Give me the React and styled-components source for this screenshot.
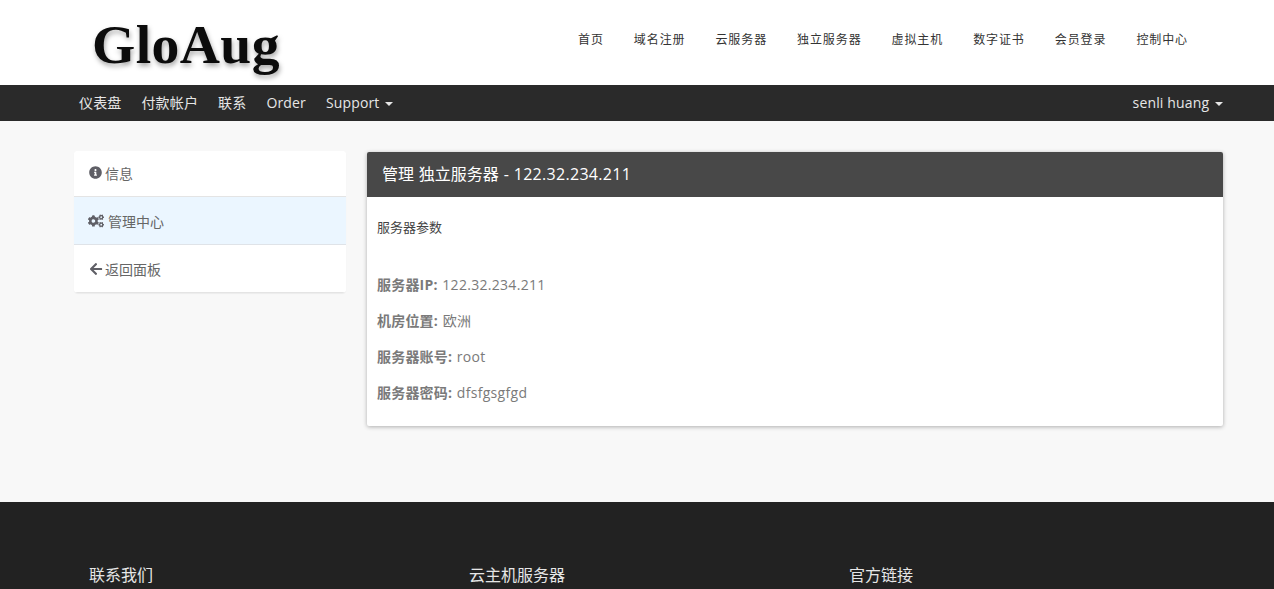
import styled, { createGlobalStyle } from "styled-components";
import { FaInfoCircle, FaCogs, FaArrowLeft } from "react-icons/fa";

const FONT = `"Open Sans", "Noto Sans CJK SC", sans-serif`;

const GlobalStyle = createGlobalStyle`
  html, body {
    margin: 0;
    padding: 0;
    height: 589px;
    overflow: hidden;
    background: #f8f8f8;
    font-family: ${FONT};
  }
  * { box-sizing: border-box; }
`;

const siteLinks = ["首页", "域名注册", "云服务器", "独立服务器", "虚拟主机", "数字证书", "会员登录", "控制中心"];
const params = [
  ["服务器IP:", "122.32.234.211"],
  ["机房位置:", "欧洲"],
  ["服务器账号:", "root"],
  ["服务器密码:", "dfsfgsgfgd"],
];

export default function App() {
  return (
    <Page>
      <GlobalStyle />
      <Header>
        <Logo>GloAug</Logo>
        <SiteNav>
          {siteLinks.map((link) => (
            <SiteLink key={link}>{link}</SiteLink>
          ))}
        </SiteNav>
      </Header>

      <ClientNav>
        <NavGroup>
          <NavLink>仪表盘</NavLink>
          <NavLink>付款帐户</NavLink>
          <NavLink>联系</NavLink>
          <NavLink>Order</NavLink>
          <NavLink>
            Support <Caret />
          </NavLink>
        </NavGroup>
        <NavLink>
          senli huang <Caret />
        </NavLink>
      </ClientNav>

      <Main>
        <Sidebar>
          <SideItem>
            <InfoIcon size={13} />
            信息
          </SideItem>
          <SideItem active>
            <CogsIcon size={16} />
            管理中心
          </SideItem>
          <SideItem>
            <BackIcon size={14} />
            返回面板
          </SideItem>
        </Sidebar>

        <Panel>
          <PanelHeading>
            管理 独立服务器 - <Latin>122.32.234.211</Latin>
          </PanelHeading>
          <PanelBody>
            <SectionTitle>服务器参数</SectionTitle>
            {params.map(([label, value]) => (
              <Param key={label}>
                <strong>{label}</strong> <Latin>{value}</Latin>
              </Param>
            ))}
          </PanelBody>
        </Panel>
      </Main>

      <Footer>
        <FooterTitle>联系我们</FooterTitle>
        <FooterTitle>云主机服务器</FooterTitle>
        <FooterTitle>官方链接</FooterTitle>
      </Footer>
    </Page>
  );
}

const Page = styled.div`
  height: 589px;
  overflow: hidden;
  display: flex;
  flex-direction: column;
`;

const Header = styled.header`
  height: 85px;
  background: #fff;
  display: flex;
  align-items: flex-start;
  justify-content: space-between;
  padding: 0 86px 0 92px;
`;

const Logo = styled.div`
  font-family: "Liberation Serif", serif;
  font-weight: 700;
  font-size: 54px;
  line-height: 54px;
  margin-top: 18px;
  letter-spacing: 0.4px;
  color: #0c0c0c;
  transform: scaleX(1.03);
  transform-origin: left center;
  filter: blur(0.7px);
  text-shadow: 1px 3px 5px rgba(0, 0, 0, 0.35);
`;

const SiteNav = styled.nav`
  display: flex;
  gap: 30px;
  margin-top: 31px;
`;

const SiteLink = styled.a`
  font-size: 12px;
  line-height: 17px;
  letter-spacing: 0.9px;
  color: #333;
`;

const ClientNav = styled.nav`
  height: 36px;
  background: #2a2a2a;
  display: flex;
  align-items: center;
  justify-content: space-between;
  padding: 0 51px 0 79px;
`;

const NavGroup = styled.div`
  display: flex;
  gap: 20px;
`;

const NavLink = styled.a`
  font-size: 14px;
  line-height: 20px;
  letter-spacing: 0.15px;
  color: #e6e6e6;
`;

const Latin = styled.span`
  letter-spacing: 0.3px;
`;

const Caret = styled.span`
  display: inline-block;
  width: 0;
  height: 0;
  margin-left: 2px;
  vertical-align: middle;
  border-top: 4px solid #e6e6e6;
  border-left: 4px solid transparent;
  border-right: 4px solid transparent;
`;

const Main = styled.main`
  height: 381px;
  display: flex;
  align-items: flex-start;
  gap: 21px;
  padding: 30px 51px 0 74px;
`;

const Sidebar = styled.aside`
  width: 272px;
  flex: none;
  background: #fff;
  border-radius: 4px;
  overflow: hidden;
  box-shadow: 0 1px 1px rgba(0, 0, 0, 0.05);
`;

const SideItem = styled.a`
  display: flex;
  align-items: center;
  height: 48px;
  padding: 0 15px;
  font-size: 14px;
  color: #666;
  background: ${(props) => (props.active ? "#ebf6ff" : "#fff")};
  border-bottom: 1px solid ${(props) => (props.active ? "#dfe3e8" : "#e4e4e4")};

  &:first-child {
    height: 46px;
    padding-bottom: 2px;
  }
`;

const InfoIcon = styled(FaInfoCircle)`
  flex: none;
  margin-right: 3px;
  color: #5f5f66;
`;

const CogsIcon = styled(FaCogs)`
  flex: none;
  margin: 0 4px 0 -1px;
  color: #5f5f66;
`;

const BackIcon = styled(FaArrowLeft)`
  flex: none;
  margin-right: 2px;
  color: #5f5f66;
`;

const Panel = styled.section`
  flex: 1;
  margin-top: 1px;
  background: #fff;
  border-radius: 2px;
  overflow: hidden;
  box-shadow: 0 1px 4px rgba(0, 0, 0, 0.3);
`;

const PanelHeading = styled.h3`
  margin: 0;
  height: 45px;
  padding: 0 15px;
  background: #484848;
  color: #fff;
  font-size: 16px;
  line-height: 44px;
  font-weight: 400;
  word-spacing: 0.7px;
`;

const PanelBody = styled.div`
  height: 229px;
  padding: 20px 10px 0;
  font-size: 14px;
  line-height: 20px;
  color: #7a7a7a;
`;

const SectionTitle = styled.p`
  margin: 0 0 38px;
  font-size: 13px;
  color: #444;
`;

const Param = styled.p`
  margin: 0 0 16px;

  strong {
    font-weight: 700;
    letter-spacing: 0.2px;
    margin-right: 1px;
  }
`;

const Footer = styled.footer`
  flex: 1;
  background: #222;
  display: grid;
  grid-template-columns: repeat(3, 380px);
  padding: 62px 0 0 89px;
`;

const FooterTitle = styled.h4`
  margin: 0;
  color: #e6e6e6;
  font-size: 16px;
  line-height: 22px;
  font-weight: 400;
`;
